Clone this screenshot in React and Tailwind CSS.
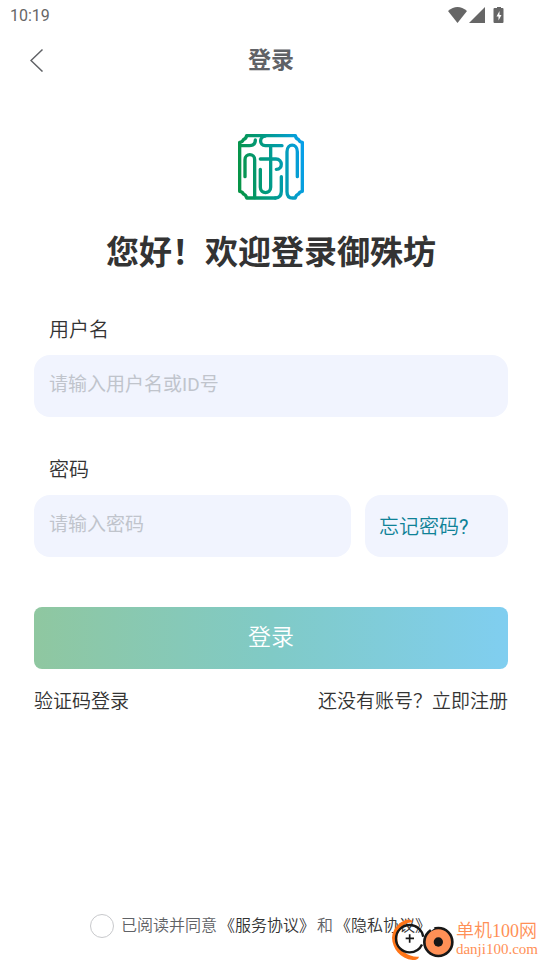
import { useState } from 'react';

const inputClass =
  'h-[62px] w-full rounded-2xl bg-[#f1f4fe] px-[15px] pb-[4px] text-[19px] font-normal text-[#333] outline-none placeholder:text-[#c0c4cc]';

function StatusBar() {
  return (
    <div className="flex h-8 items-center justify-between pr-[34px] pl-[10px] text-[#666]">
      <span className="font-['Roboto',sans-serif] text-[16px] font-normal">10:19</span>
      <svg className="h-[18px] w-[58px]" viewBox="0 0 58 18" fill="currentColor" aria-hidden="true">
        <path d="M0 4Q9.500-4 19 4L9.500 16Z" />
        <path d="M37 0V16H21Z" />
        <path d="M49 0h4v1h1.500q1 0 1 1V15q0 1-1 1h-8q-1 0-1-1V2q0-1 1-1H49Z" />
        <path fill="#fff" d="M51.500 4v4h2l-3 5.500v-4h-2Z" />
      </svg>
    </div>
  );
}

function Logo() {
  return (
    <svg className="h-[66px] w-[66px]" viewBox="38 41 198 198" fill="none" role="img" aria-label="御殊坊">
      <defs>
        <linearGradient id="logo" gradientUnits="userSpaceOnUse" x1="40" y1="150" x2="236" y2="130">
          <stop offset="0" stopColor="#079447" />
          <stop offset="0.5" stopColor="#009b8f" />
          <stop offset="1" stopColor="#079fe8" />
        </linearGradient>
      </defs>
      <g stroke="url(#logo)" strokeWidth="10" strokeLinecap="round" strokeLinejoin="round">
        <path d="M150 233H64Q62 223 54 221Q52 214 43 213V66Q52 65 54 58Q62 56 64 46H210Q212 56 220 58Q222 65 231 66V213Q222 214 220 221Q212 223 210 233H202C190 233 185 226 185 214V94C185 68 216 68 216 94V169" />
        <path d="M44 76H72Q90 76 90 59" />
        <path d="M59 169V118C59 98 88 98 88 118V232" />
        <path d="M120 47C101 49 101 75 120 76H170" />
        <path d="M136 77V201C136 222 105 222 105 201V147" />
        <path d="M105 116H152C172 116 174 147 153 147" />
        <path d="M168 169V213Q168 233 150 233" />
      </g>
    </svg>
  );
}

function Watermark() {
  return (
    <div className="pointer-events-none absolute right-0 bottom-0 flex items-start pr-[2px] text-[#ff9056]">
      <svg className="h-[44px] w-[65px]" viewBox="33 33 195 132" fill="none" aria-hidden="true">
        <path d="M98 51C88 30 38 58 36 98C37 130 61 161 98 165Q115 165 117 155Q93 157 73 142C44 121 47 79 72 60Q82 52 98 51Z" fill="#ff7518" />
        <circle cx="89" cy="101" r="41" stroke="#171717" strokeWidth="7" strokeDasharray="232 26" strokeDashoffset="-18" />
        <path d="M89 88V113M77 100H102" stroke="#171717" strokeWidth="5" />
        <circle cx="175" cy="111" r="42" fill="#ff9056" stroke="#171717" strokeWidth="8" />
        <path d="M151 73L161 66" stroke="#fff" strokeWidth="10" />
        <circle cx="175" cy="111" r="14" fill="#171717" />
      </svg>
      <div className="pt-1 font-['Liberation_Serif','Noto_Sans_CJK_SC',serif]">
        <p className="text-[18px] leading-[22px]">单机100网</p>
        <p className="text-[15px] leading-[14px]">danji100.com</p>
      </div>
    </div>
  );
}

export default function App() {
  const [username, setUsername] = useState('');
  const [password, setPassword] = useState('');
  const [agreed, setAgreed] = useState(false);

  return (
    <div className="relative flex min-h-screen flex-col bg-white font-['Roboto','Noto_Sans_CJK_SC',sans-serif] font-[350] text-[#333]">
      <StatusBar />

      <header className="grid h-14 grid-cols-[1fr_auto_1fr] items-center pr-[26px] pl-7">
        <button type="button" aria-label="返回" className="w-fit p-[2px] text-[#606266]">
          <svg className="h-[24px] w-[14px]" viewBox="0 0 14 24" fill="none" stroke="currentColor" strokeWidth="1.500">
            <path d="M12.500 1.500L1 12.500L12.500 23.500" />
          </svg>
        </button>
        <h1 className="pt-[2px] text-[23px] font-bold text-[#606266]">登录</h1>
      </header>

      <main className="flex flex-1 flex-col pr-8 pl-[34px]">
        <div className="mt-[46px] flex justify-center">
          <Logo />
        </div>
        <h2 className="mt-[29px] text-center text-[33px] leading-[48px] font-bold">您好！欢迎登录御殊坊</h2>

        <form onSubmit={(e) => e.preventDefault()}>
          <label htmlFor="username" className="mt-[38px] block pl-[15px] text-[20px] leading-[30px]">
            用户名
          </label>
          <input
            id="username"
            type="text"
            value={username}
            onChange={(e) => setUsername(e.target.value)}
            placeholder="请输入用户名或ID号"
            className={`${inputClass} mt-[10px]`}
          />

          <label htmlFor="password" className="mt-[38px] block pl-[15px] text-[20px] leading-[30px]">
            密码
          </label>
          <div className="mt-[10px] flex gap-[14px]">
            <input
              id="password"
              type="password"
              value={password}
              onChange={(e) => setPassword(e.target.value)}
              placeholder="请输入密码"
              className={`${inputClass} min-w-0 flex-1`}
            />
            <button type="button" className="w-[143px] shrink-0 rounded-2xl bg-[#f1f4fe] px-[14px] pt-[2px] text-left text-[20px] text-[#0f8297]">
              忘记密码<span className="font-normal">?</span>
            </button>
          </div>

          <button
            type="submit"
            className="mt-[50px] h-[62px] w-full rounded-lg bg-linear-to-r from-[#8fc7a0] via-[#80cac6] to-[#80cef0] text-[23px] text-white"
          >
            登录
          </button>
        </form>

        <div className="mt-[18px] flex justify-between text-[19px] leading-[30px]">
          <a href="#code">验证码登录</a>
          <a href="#register">还没有账号？立即注册</a>
        </div>

        <div className="mt-auto flex items-center gap-[7px] pb-5 pl-14 text-[16px] text-[#606266]">
          <input
            id="agree"
            type="checkbox"
            checked={agreed}
            onChange={(e) => setAgreed(e.target.checked)}
            className="h-6 w-6 appearance-none rounded-full border border-[#c8c9cc] bg-white checked:bg-[#80cac6]"
          />
          <div className="flex gap-[2px] leading-[28px]">
            <label htmlFor="agree">已阅读并同意</label>
            <a href="#terms" className="text-[#333]">《服务协议》</a>
            <span>和</span>
            <a href="#privacy" className="text-[#333]">《隐私协议》</a>
          </div>
        </div>
      </main>

      <Watermark />
    </div>
  );
}
